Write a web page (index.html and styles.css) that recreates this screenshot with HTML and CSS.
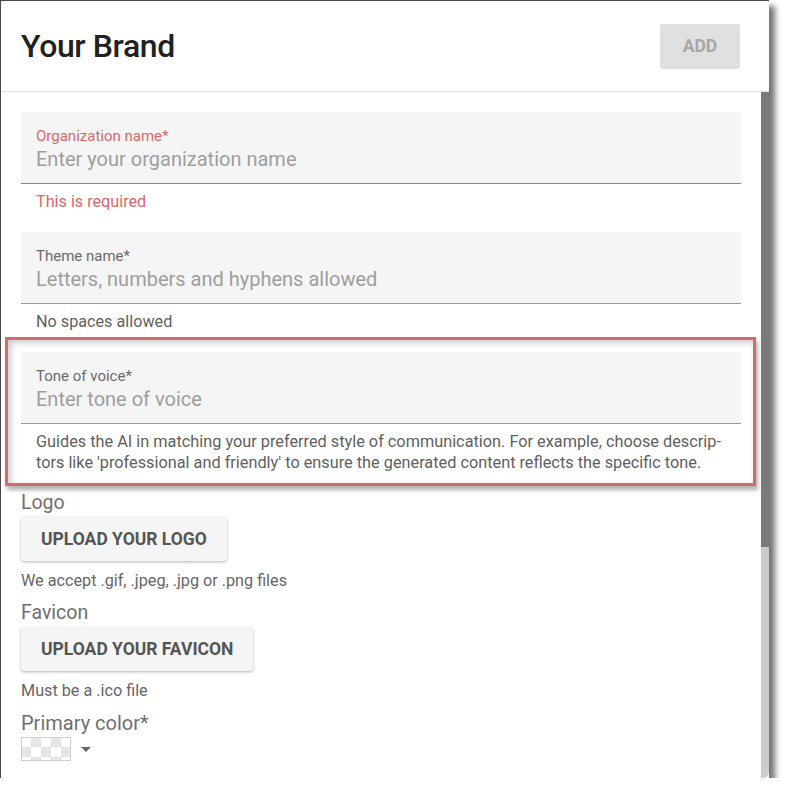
FILE: index.html
```html
<!DOCTYPE html>
<html>
<head>
<meta charset="utf-8">
<link rel="stylesheet" href="styles.css">
</head>
<body>
<div class="window">
  <header class="header">
    <h1 class="title">Your Brand</h1>
    <button class="add-btn">ADD</button>
  </header>
  <div class="body">
    <div class="content">
      <div class="group">
        <div class="field field-error">
          <div class="label label-error">Organization name*</div>
          <div class="placeholder">Enter your organization name</div>
        </div>
        <div class="helper helper-error">This is required</div>
      </div>
      <div class="group">
        <div class="field">
          <div class="label">Theme name*</div>
          <div class="placeholder">Letters, numbers and hyphens allowed</div>
        </div>
        <div class="helper">No spaces allowed</div>
      </div>
      <div class="group group-callout">
        <div class="field">
          <div class="label label-tone">Tone of voice*</div>
          <div class="placeholder placeholder-tone">Enter tone of voice</div>
        </div>
        <div class="helper helper-tone">Guides the AI in matching your preferred style of communication. For example, choose descrip-<br>tors like 'professional and friendly' to ensure the generated content reflects the specific tone.</div>
      </div>
      <div class="section">
        <div class="section-label">Logo</div>
        <button class="upload-btn">UPLOAD YOUR LOGO</button>
        <div class="section-help">We accept .gif, .jpeg, .jpg or .png files</div>
      </div>
      <div class="section">
        <div class="section-label">Favicon</div>
        <button class="upload-btn">UPLOAD YOUR FAVICON</button>
        <div class="section-help">Must be a .ico file</div>
      </div>
      <div class="section">
        <div class="section-label section-label-lg">Primary color*</div>
        <div class="color-row">
          <span class="swatch"></span>
          <span class="caret"></span>
        </div>
      </div>
    </div>
    <div class="scrollbar">
      <div class="thumb"></div>
      <div class="track"></div>
    </div>
  </div>
</div>
</body>
</html>
```

FILE: styles.css
```css
* { box-sizing: border-box; }
html, body { margin: 0; padding: 0; background: #ffffff; }
body { font-family: Roboto, "Liberation Sans", sans-serif; color: #212121; }

.window {
  width: 769px;
  height: 778px;
  background: #fff;
  border-top: 1px solid #4a4a48;
  border-left: 1px solid #4a4a48;
  box-shadow: 6px 6px 6px rgba(0,0,0,0.55);
  display: flex;
  flex-direction: column;
  overflow: hidden;
}

.header {
  height: 91px;
  flex: none;
  border-bottom: 1px solid #dcdcdc;
  display: flex;
  align-items: center;
  justify-content: space-between;
  padding: 0 29px 0 20px;
}
.title {
  margin: 0;
  font-size: 32px;
  font-weight: 500;
  color: #212121;
  line-height: 1;
  letter-spacing: -0.4px;
}
.add-btn {
  width: 80px;
  height: 45px;
  border: none;
  border-radius: 3px;
  background: #e0e0e0;
  color: #a6a6a6;
  font-family: Roboto, sans-serif;
  font-size: 17.5px;
  font-weight: 700;
  padding: 0;
}

.body {
  flex: 1;
  display: flex;
  min-height: 0;
}
.content {
  flex: 1;
  padding: 20px 20px 0 20px;
  overflow: hidden;
}
.scrollbar {
  width: 8px;
  flex: none;
  display: flex;
  flex-direction: column;
}
.thumb { height: 455px; background: #7a7a7a; }
.track { flex: 1; background: #cbcbcb; border-bottom-right-radius: 6px; }

.group { margin-bottom: 20px; }
.group-callout { position: relative; margin-bottom: 19px; }
.group-callout::before {
  content: "";
  position: absolute;
  left: -16px;
  top: -15px;
  width: 745px;
  height: 143px;
  border: 3px solid #d26b6e;
  box-shadow: 2px 4px 4px rgba(0,0,0,0.3), inset 3px 3px 6px rgba(0,0,0,0.2);
  pointer-events: none;
}

.field {
  height: 72px;
  background: #f5f5f5;
  border-bottom: 1px solid #999;
  padding: 16px 15px 0 15px;
  border-radius: 2px 2px 0 0;
}
.field-error { border-bottom-color: #d26b6e; }
.label {
  font-size: 15px;
  line-height: 16px;
  color: #6a6a6a;
}
.label-error { color: #d9676b; }
.placeholder {
  margin-top: 4px;
  font-size: 20px;
  line-height: 22px;
  color: #9e9e9e;
}
.helper {
  padding: 7px 15px 0 15px;
  font-size: 16.2px;
  line-height: 21px;
  color: #5f5f5f;
}
.helper-error { color: #d9676b; }
.helper-tone { font-size: 16.3px; }

.section { margin-bottom: 11px; }
.section-label {
  font-size: 19.5px;
  line-height: 22px;
  color: #6f6f6f;
}
.section-label-lg { font-size: 20px; }
.upload-btn {
  display: block;
  margin-top: 3px;
  height: 44px;
  padding: 0 20px;
  border: none;
  border-radius: 3px;
  background: #f5f5f5;
  box-shadow: 0 1px 3px rgba(0,0,0,0.3);
  color: #555;
  font-family: Roboto, sans-serif;
  font-size: 17.5px;
  font-weight: 700;
}
.section-help {
  margin-top: 9px;
  font-size: 16.2px;
  line-height: 21px;
  color: #666;
}
.color-row {
  margin-top: 3px;
  display: flex;
  align-items: center;
  gap: 10px;
}
.swatch {
  width: 50px;
  height: 24px;
  border: 1px solid #cfcfcf;
  background-color: #fff;
  background-image: conic-gradient(#e6e6e6 25%, #fff 0 50%, #e6e6e6 0 75%, #fff 0);
  background-size: 20px 20px;
  background-position: -1px -1px;
}
.caret {
  width: 0;
  height: 0;
  border-left: 5px solid transparent;
  border-right: 5px solid transparent;
  border-top: 5px solid #666;
}
```
